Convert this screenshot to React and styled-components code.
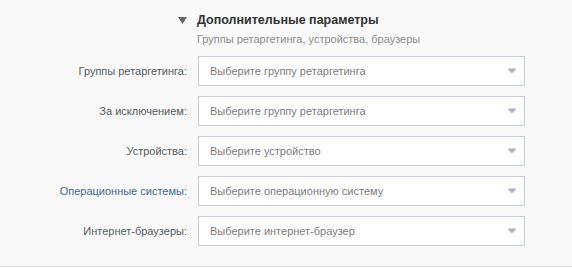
import React from "react";
import styled, { createGlobalStyle } from "styled-components";

const Global = createGlobalStyle`
  html, body { margin: 0; padding: 0; background: #ffffff; }
  body { font-family: "Liberation Sans", Arial, sans-serif; }
`;

const Panel = styled.div`
  box-sizing: border-box;
  width: 572px;
  height: 267px;
  background: #f9f9f9;
  border-bottom: 1px solid #e2e2e2;
  padding-top: 12px;
`;

const Header = styled.div`
  margin-left: 178px;
  display: flex;
  align-items: flex-start;
`;

const Toggle = styled.span`
  width: 19px;
  padding-top: 5px;
  display: flex;
  justify-content: flex-start;
`;

const HeaderText = styled.div`
  display: flex;
  flex-direction: column;
`;

const Title = styled.div`
  font-size: 12.5px;
  font-weight: bold;
  color: #333333;
  line-height: 17px;
`;

const Subtitle = styled.div`
  margin-top: 3px;
  font-size: 11px;
  color: #8c8c8c;
  line-height: 15px;
`;

const Form = styled.div`
  margin-top: 9px;
  display: grid;
  grid-template-columns: 187px 327px;
  column-gap: 11px;
  row-gap: 10px;
`;

const Label = styled.div`
  text-align: right;
  font-size: 11px;
  line-height: 30px;
  color: ${(p) => (p.$active ? "#45688e" : "#555a60")};
`;

const Select = styled.div`
  box-sizing: border-box;
  height: 30px;
  background: #ffffff;
  border: 1px solid #c7ccd3;
  display: flex;
  align-items: center;
  justify-content: space-between;
  padding: 0 7px 0 11px;
  font-size: 11px;
  color: #7c7c7c;
  cursor: pointer;
`;

const Arrow = () => (
  <svg width="10" height="6" viewBox="0 0 10 6">
    <path d="M0.5 0.5 H9.5 L5 5.5 Z" fill="#aab0bb" />
  </svg>
);

const Tri = () => (
  <svg width="9" height="7" viewBox="0 0 9 7">
    <path d="M0 0 H9 L4.5 7 Z" fill="#666666" />
  </svg>
);

const rows = [
  { label: "Группы ретаргетинга:", ph: "Выберите группу ретаргетинга" },
  { label: "За исключением:", ph: "Выберите группу ретаргетинга" },
  { label: "Устройства:", ph: "Выберите устройство" },
  { label: "Операционные системы:", ph: "Выберите операционную систему", active: true },
  { label: "Интернет-браузеры:", ph: "Выберите интернет-браузер" },
];

export default function App() {
  return (
    <>
      <Global />
      <Panel>
        <Header>
          <Toggle>
            <Tri />
          </Toggle>
          <HeaderText>
            <Title>Дополнительные параметры</Title>
            <Subtitle>Группы ретаргетинга, устройства, браузеры</Subtitle>
          </HeaderText>
        </Header>
        <Form>
          {rows.map((r, i) => (
            <React.Fragment key={i}>
              <Label $active={r.active}>{r.label}</Label>
              <Select>
                <span>{r.ph}</span>
                <Arrow />
              </Select>
            </React.Fragment>
          ))}
        </Form>
      </Panel>
    </>
  );
}
